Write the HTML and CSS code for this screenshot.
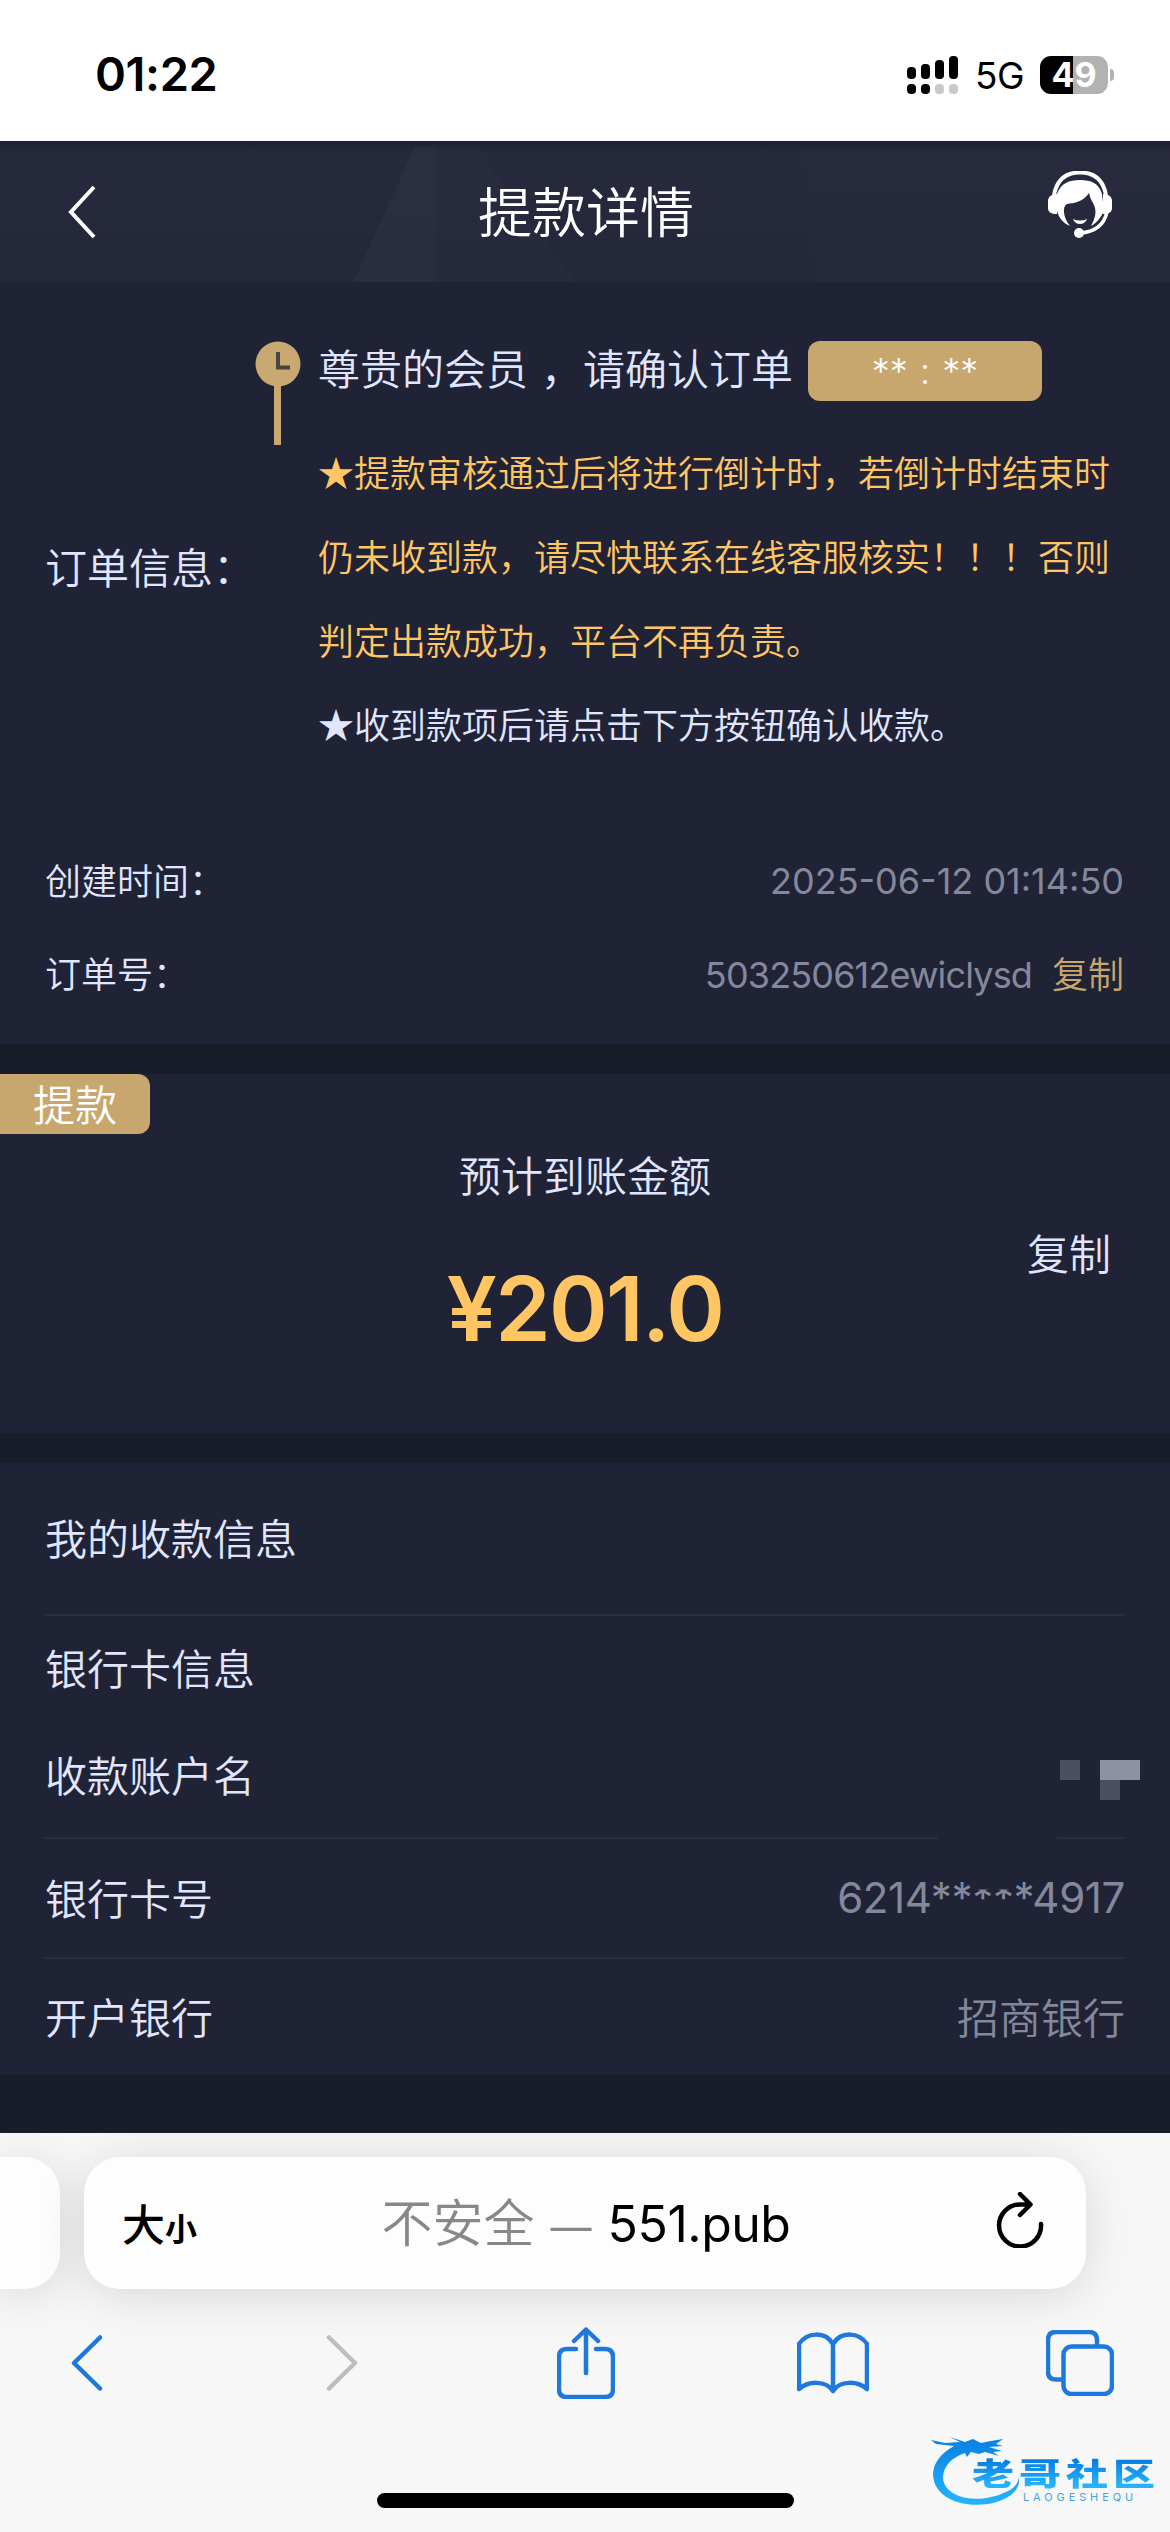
FILE: index.html
```html
<!DOCTYPE html>
<html lang="zh-CN">
<head>
<meta charset="utf-8">
<title>提款详情</title>
<link rel="stylesheet" href="styles.css">
</head>
<body>
<div class="status">
  <div class="time">01:22</div>
  <div class="status-right">
    <svg class="signal" width="52" height="38" viewBox="0 0 52 38">
      <rect x="0" y="11" width="9" height="12" rx="4"/><rect x="14" y="8" width="9" height="15" rx="4"/><rect x="28" y="4" width="9" height="19" rx="4"/><rect x="42" y="0" width="9" height="23" rx="4"/>
      <rect x="0" y="28" width="9" height="10" rx="4"/><rect x="14" y="28" width="9" height="10" rx="4"/><rect class="off" x="28" y="28" width="9" height="10" rx="4"/><rect class="off" x="42" y="28" width="9" height="10" rx="4"/>
    </svg>
    <span class="net">5G</span>
    <span class="battery">49</span>
    <span class="battery-cap"></span>
  </div>
</div>

<header class="header">
  <svg class="header-art" width="1170" height="141" viewBox="0 0 1170 141">
    <path d="M415 5H475L575 141H353Z" fill="#fff" opacity=".012"/>
    <path d="M415 5H436V141H353Z" fill="#fff" opacity=".016"/>
    <path d="M800 10H1170V141H815Z" fill="#fff" opacity=".008"/>
  </svg>
  <svg class="back" width="28" height="54" viewBox="0 0 28 54"><path d="M26 2L3 27L26 52"/></svg>
  <h1 class="title">提款详情</h1>
  <svg class="agent" width="64" height="67" viewBox="0 0 64 67">
    <path d="M6 24C9 8 19 1.500 32 1.500S55 8 58 24" fill="none" stroke="#fff" stroke-width="4"/>
    <path d="M9 23C13 12 21 9 32 9S51 12 54 23L56 40C53 46 49 52 43 55C48 46 49 39 45 32C43 29 42 26 41 22C35 31 26 32 19 33C14 35 15 47 22 55C15 52 11 47 9 40Z" fill="#fff"/>
    <path d="M9 23V43C3 43 0 41 0 37V30C0 26 3 23 9 23ZM55 23C61 23 64 26 64 30V37C64 41 61 43 55 43Z" fill="#fff"/>
    <path d="M25 48Q32 51 39 48Q37 53 32 53T25 48Z" fill="#fff"/>
    <path d="M59 41C56 54 47 61 32 62" fill="none" stroke="#fff" stroke-width="3.500"/>
    <circle cx="31" cy="62" r="5" fill="#fff"/>
  </svg>
</header>

<main>
  <section class="card order">
    <div class="order-info">
      <div class="label-lg">订单信息：</div>
      <svg class="clock" width="46" height="104" viewBox="0 0 46 104">
        <path d="M19 40H26V104H19Z" fill="#c9a971"/><circle cx="23" cy="23" r="22.500" fill="#c9a971"/>
        <path d="M23 11V26.500H35" fill="none" stroke="#4a4440" stroke-width="4"/>
      </svg>
      <div class="notice">
        <div class="notice-head"><span>尊贵的会员<i class="gap"></i>，请确认订单</span><span class="timer">** : **</span></div>
        <p class="gold">★提款审核通过后将进行倒计时，若倒计时结束时<br>仍未收到款，请尽快联系在线客服核实！！！否则<br>判定出款成功，平台不再负责。</p>
        <p>★收到款项后请点击下方按钮确认收款。</p>
      </div>
    </div>
    <div class="meta"><span>创建时间：</span><span class="num date">2025-06-12 01:14:50</span></div>
    <div class="meta"><span>订单号：</span><span><span class="num orderno">503250612ewiclysd</span><a class="copy">复制</a></span></div>
  </section>

  <section class="card amount">
    <div class="tag">提款</div>
    <div class="amount-label">预计到账金额</div>
    <div class="amount-value">¥201.0</div>
    <a class="amount-copy">复制</a>
  </section>

  <section class="card bank">
    <div class="row head">我的收款信息</div>
    <div class="row sub">银行卡信息</div>
    <div class="row name"><span>收款账户名</span>
      <svg class="mosaic" width="216" height="84" viewBox="0 0 216 84">
        <path d="M122 0H142V20H122ZM162 20H182V40H162Z" fill="#4a4e60"/><path d="M162 0H202V20H162Z" fill="#8d91a4"/>
        <path d="M0 73H119V83H0Z" fill="#202335"/>
      </svg>
    </div>
    <div class="row number"><span>银行卡号</span><span class="num cardno">6214**<span class="cut">**</span>*4917</span></div>
    <div class="row last"><span>开户银行</span><span class="muted">招商银行</span></div>
  </section>
</main>

<footer class="browser">
  <div class="tabs">
    <div class="prev-tab"></div>
    <div class="address">
      <div class="size"><span class="big">大</span><span class="small">小</span></div>
      <div class="url"><span class="insecure">不安全</span><span class="dash">—</span><span class="domain">551.pub</span></div>
      <svg class="reload" width="48" height="56" viewBox="0 0 48 56"><path d="M45 32A21 21 0 1 1 24 12.500H34M24 2L34.500 12.500L24 23"/></svg>
    </div>
  </div>
  <nav class="tools">
    <svg width="32" height="56" viewBox="0 0 32 56"><path d="M29 2.500L3 28L29 53.500"/></svg>
    <svg class="disabled" width="32" height="56" viewBox="0 0 32 56"><path d="M3 2.500L29 28L3 53.500"/></svg>
    <svg width="58" height="72" viewBox="0 0 58 72"><path d="M19 22H10Q2 22 2 30V62Q2 70 10 70H48Q56 70 56 62V30Q56 22 48 22H39M29 46V2.500M17 14L29 2.500L41 14"/></svg>
    <svg width="72" height="62" viewBox="0 0 72 62"><path d="M36 12C28-1 10 0 2 12V57C11 49 29 48 36 59C43 48 61 49 70 57V12C62 0 44-1 36 12ZV59"/></svg>
    <svg width="68" height="66" viewBox="0 0 68 66"><path d="M17 49.500H10Q2 49.500 2 41.500V10Q2 2 10 2H43Q51 2 51 10V16"/><rect x="17.500" y="16.500" width="48.500" height="47.500" rx="8"/></svg>
  </nav>
  <div class="home"></div>
  <div class="watermark">
    <svg width="100" height="70" viewBox="0 0 100 70">
      <defs><linearGradient id="blue" x1="0" y1="0" x2="0" y2="1"><stop offset="0" stop-color="#087fe3"/><stop offset="1" stop-color="#25b4fb"/></linearGradient></defs>
      <path d="M0 5L14 8L29 7L19 2L34 7L42 4L50 8L60 6L72 4L65 9L72 11L58 12L71 16L62 17L68 21L54 17L48 19L40 17L36 22L34 18C18 23 9 36 13 48C20 66 54 69 79 55Q87 50 88 42C90 57 75 66 57 69C29 73 7 62 3 46C-1 32 8 19 23 11L5 9Z" fill="url(#blue)"/>
    </svg>
    <div class="brand">老哥社区</div>
    <div class="brand-en">LAOGESHEQU</div>
  </div>
</footer>
</body>
</html>
```

FILE: styles.css
```css
* { box-sizing: border-box; }
body {
  margin: 0;
  width: 1170px;
  height: 2532px;
  overflow: hidden;
  display: flex;
  flex-direction: column;
  background: #181d29;
  color: #e0e6ff;
  font-family: "Noto Sans CJK SC", sans-serif;
  font-weight: 350;
  font-size: 42px;
}
svg { display: block; flex: none; }
h1, p { margin: 0; font-weight: inherit; }

.status {
  height: 141px;
  flex: none;
  display: flex;
  justify-content: space-between;
  align-items: flex-start;
  padding: 44px 56px 0 95px;
  background: #fff;
  color: #000;
  font-family: Inter, sans-serif;
}
.time { font-size: 47px; line-height: 60px; font-weight: 600; letter-spacing: -.4px; }
.status-right { display: flex; align-items: center; padding-top: 11px; }
.signal .off { fill: #c9c9c9; }
.net { width: 64px; margin-left: 16px; padding-top: 2px; font-size: 37px; line-height: 38px; font-weight: 400; letter-spacing: -.5px; }
.battery {
  width: 68px;
  height: 38px;
  margin-left: 1px;
  border-radius: 11px;
  background: linear-gradient(90deg, #000 33px, #b2b2b2 33px);
  color: #fff;
  font-size: 34px;
  line-height: 38px;
  font-weight: 700;
  text-align: center;
}
.battery-cap { width: 4px; height: 12px; margin-left: 2px; border-radius: 0 4px 4px 0; background: #b2b2b2; }

.header {
  position: relative;
  height: 141px;
  flex: none;
  display: flex;
  justify-content: space-between;
  align-items: center;
  padding: 0 58px 0 68px;
  background: linear-gradient(#1e2130, #27293d 12px, #25283b 80%, #25273b);
}
.header-art { position: absolute; left: 0; top: 0; }
.back { fill: none; stroke: #fff; stroke-width: 4; }
.title { margin: 0 0 4px 28px; color: #fff; font-size: 54px; line-height: 80px; }
.agent { margin-bottom: 14px; }

.card { background: #202335; }
.order { height: 762px; padding: 0 46px 0 45px; }
.order-info { display: flex; height: 550px; }
.label-lg { width: 210px; margin-top: 254px; line-height: 60px; white-space: nowrap; }
.clock { margin-top: 59px; }
.notice { margin-left: 17px; padding-top: 45px; white-space: nowrap; font-size: 36px; line-height: 84px; }
.notice-head { display: flex; align-items: center; height: 80px; margin-bottom: 22px; font-size: 42px; line-height: 80px; }
.gap { display: inline-block; width: 13px; }
.timer {
  width: 234px;
  height: 60px;
  margin: 8px 0 0 15px;
  border-radius: 12px;
  background: #c8a76f;
  color: #fff;
  font: 350 36px/60px Inter, sans-serif;
  word-spacing: 2px;
  text-align: center;
}
.gold { color: #ffc663; }
.meta { display: flex; justify-content: space-between; height: 93px; line-height: 94px; font-size: 36px; }
.num { font-family: Inter, sans-serif; font-weight: 400; color: #85889c; }
.date, .orderno { font-size: 36px; }
.date { padding-top: 2px; }
.orderno { letter-spacing: -.85px; }
.copy { margin-left: 20px; color: #c8a76f; }

.amount { position: relative; height: 359px; margin-top: 30px; text-align: center; }
.tag {
  position: absolute;
  left: 0;
  top: 0;
  width: 150px;
  height: 60px;
  border-radius: 0 12px 12px 0;
  background: #c8a76f;
  color: #fff;
  line-height: 57px;
}
.amount-label { padding-top: 68px; line-height: 64px; }
.amount-value { margin-top: 51px; font: 600 89px/104px Inter, sans-serif; letter-spacing: -1.7px; color: #ffc663; }
.amount-copy { position: absolute; right: 59px; top: 146px; line-height: 64px; }

.bank { height: 612px; margin-top: 30px; padding: 0 45px; }
.row { display: flex; justify-content: space-between; align-items: center; }
.row > span { padding-bottom: 4px; }
.head { height: 153px; padding-bottom: 4px; border-bottom: 2px solid #2a2d40; }
.sub { height: 103px; padding-bottom: 3px; }
.name { height: 120px; border-bottom: 2px solid #2a2d40; }
.name > span { padding-bottom: 10px; }
.mosaic { position: relative; left: 29px; top: 24px; }
.number { height: 120px; border-bottom: 2px solid #2a2d40; }
.last { height: 116px; }
.number > .cardno { padding-bottom: 2px; font-size: 42px; letter-spacing: -.35px; }
.cut { display: inline-block; line-height: 50px; clip-path: inset(17px 0 0 0); }
.muted { color: #85889c; }

.browser { position: absolute; left: 0; top: 2133px; width: 1170px; height: 399px; background: #f7f7f7; color: #000; overflow: hidden; }
.tabs { display: flex; gap: 24px; padding-top: 24px; }
.prev-tab, .address { height: 132px; background: #fdfdfd; box-shadow: 0 6px 48px rgba(0,0,0,.13); }
.prev-tab { width: 60px; border-radius: 0 36px 36px 0; }
.address { width: 1002px; border-radius: 36px; display: flex; align-items: center; justify-content: space-between; padding: 0 42px 0 38px; }
.size { display: flex; align-items: baseline; width: 80px; padding-top: 2px; font-weight: 500; line-height: 60px; }
.big { font-size: 43px; }
.small { font-size: 32px; font-weight: 700; }
.url { display: flex; align-items: baseline; margin-right: 26px; font-size: 51px; line-height: 70px; white-space: nowrap; }
.insecure, .dash { color: #88888b; }
.dash { margin: 0 16px 0 16px; font: 400 41px/70px Inter, sans-serif; }
.domain { font: 400 50px/70px Inter, sans-serif; letter-spacing: -.5px; }
.reload { fill: none; stroke: #000; stroke-width: 4.5; stroke-linecap: round; stroke-linejoin: round; margin-bottom: 6px; }
.tools {
  display: grid;
  grid-template-columns: 255px 231px 240px 249px 68px;
  align-items: center;
  height: 80px;
  margin: 34px 0 0 71px;
  fill: none;
  stroke: #1f78dc;
  stroke-width: 4.5;
  stroke-linecap: round;
  stroke-linejoin: round;
}
.disabled { stroke: #bdbdbd; }
.home { width: 417px; height: 15px; margin: 90px auto 0; border-radius: 8px; background: #000; }
.watermark { position: absolute; left: 931px; top: 302px; width: 230px; height: 75px; }
.brand {
  position: absolute;
  left: 41px;
  top: 12px;
  font-size: 42px;
  line-height: 50px;
  letter-spacing: 5px;
  font-weight: 900;
  white-space: nowrap;
  transform: scaleY(.74);
  background: linear-gradient(#087fe3 20%, #25b4fb 85%);
  -webkit-background-clip: text;
  background-clip: text;
  color: transparent;
}
.brand-en { position: absolute; left: 92px; top: 55px; font: 400 11px/14px Inter, sans-serif; letter-spacing: 3.9px; color: #4c9fdc; }
```
